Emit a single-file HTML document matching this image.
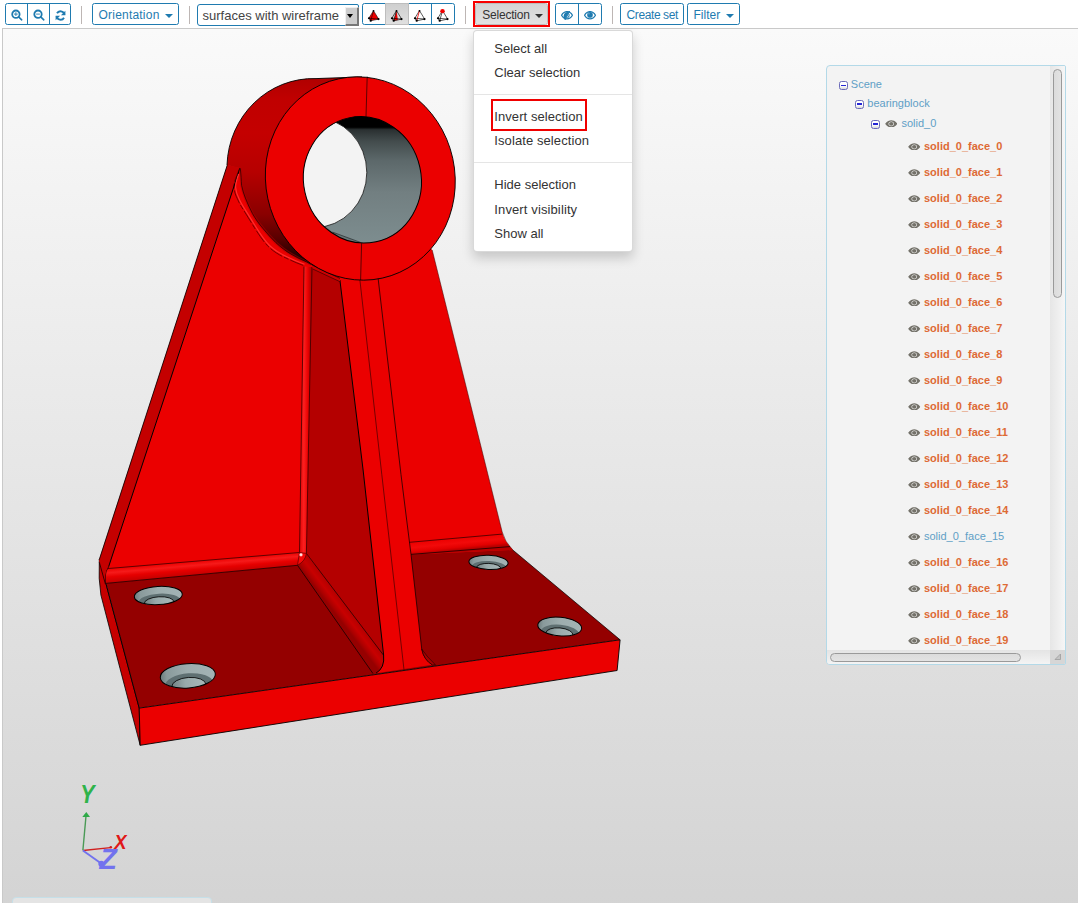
<!DOCTYPE html>
<html>
<head>
<meta charset="utf-8">
<title>CAD viewer</title>
<style>
html,body{margin:0;padding:0;}
body{width:1078px;height:903px;overflow:hidden;background:#fff;position:relative;font-family:"Liberation Sans",sans-serif;}
#canvas{position:absolute;left:2px;top:28px;width:1090px;height:890px;border:1px solid #c9c9c9;box-sizing:border-box;
 background:linear-gradient(to bottom,#fafafa 0%,#d3d3d3 100%);}
#model{position:absolute;left:0;top:0;width:1078px;height:903px;}
.tb{position:absolute;top:3px;height:22px;box-sizing:border-box;border:1px solid #1f7bb0;border-radius:2.5px;background:#fff;color:#1f7bb0;font-size:12px;line-height:20px;white-space:nowrap;}
.tb span.t{position:absolute;top:1px;}
.sep{position:absolute;top:6px;width:1px;height:18px;background:#bdb6b4;}
.caret{position:absolute;width:0;height:0;border-left:4px solid transparent;border-right:4px solid transparent;border-top:4px solid currentColor;top:9.5px;}
.div{position:absolute;top:0;width:1px;height:20px;background:#1f7bb0;}
svg.ic{position:absolute;}
#menu{position:absolute;left:473px;top:30px;width:160px;height:221.5px;box-sizing:border-box;background:#fff;border:1px solid rgba(0,0,0,.15);border-radius:4px;box-shadow:0 6px 12px rgba(0,0,0,.175);font-size:13px;color:#333;}
#menu .mi{position:absolute;left:20.3px;height:16px;line-height:16px;white-space:nowrap;}
#menu .md{position:absolute;left:0;width:158px;height:1px;background:#e5e5e5;}
#tree{position:absolute;left:826px;top:65px;width:240px;height:600px;box-sizing:border-box;border:1px solid #b3d9e8;border-radius:4px 2px 2px 4px;background:#f3f3f3;overflow:hidden;}
.row{position:absolute;left:0;height:16px;width:1078px;font-size:11px;line-height:16px;}
.row span{position:absolute;top:-0.7px;white-space:nowrap;}
.fn{color:#5f9fc6;}
.fn.sel{color:#de6a35;font-weight:bold;}
.lbl{color:#5f9fc6;}
svg.eye{position:absolute;top:4.2px;width:12.5px;height:7.6px;}
.tg{position:absolute;width:9px;height:9px;box-sizing:border-box;border:1px solid #6c6cba;border-radius:2.5px;background:linear-gradient(#fff 55%,#d8d8d8);}
.tg:after{content:"";position:absolute;left:1px;top:2.8px;width:5px;height:1.4px;background:#2626d6;}
</style>
</head>
<body>
<svg width="0" height="0" style="position:absolute">
<defs>
<symbol id="eye" viewBox="0 0 14 10"><path d="M0.2 5 C2.4 1 5 0.2 7 0.2 C9 0.2 11.6 1 13.8 5 C11.6 9 9 9.8 7 9.8 C5 9.8 2.4 9 0.2 5 Z M7 2 C4.9 2 3.9 3.6 3.9 5 C3.9 6.6 5.1 8.2 7 8.2 C8.9 8.2 10.1 6.6 10.1 5 C10.1 3.6 9.1 2 7 2 Z" fill="#74726a" fill-rule="evenodd"/><circle cx="7" cy="5" r="2.45" fill="#74726a"/></symbol>
</defs>
</svg>

<div id="canvas"></div>

<!-- 3D model -->
<svg id="model" viewBox="0 0 1078 903">
<defs>
<linearGradient id="holeg" x1="0" y1="0" x2="1" y2="0"><stop offset="0" stop-color="#6c7c7d"/><stop offset="0.12" stop-color="#899a9b"/><stop offset="0.5" stop-color="#9dadae"/><stop offset="1" stop-color="#a3b3b4"/></linearGradient>
<linearGradient id="holeg2" x1="0" y1="0" x2="1" y2="0"><stop offset="0" stop-color="#728283"/><stop offset="0.4" stop-color="#98a9aa"/><stop offset="1" stop-color="#a8b8b9"/></linearGradient>
<linearGradient id="cylside" gradientUnits="userSpaceOnUse" x1="0" y1="76" x2="0" y2="268"><stop offset="0" stop-color="#ae0000"/><stop offset="0.12" stop-color="#c00000"/><stop offset="0.3" stop-color="#c40000"/><stop offset="0.5" stop-color="#b60000"/><stop offset="0.72" stop-color="#8a0000"/><stop offset="0.85" stop-color="#580000"/><stop offset="0.93" stop-color="#2c0000"/><stop offset="1" stop-color="#0c0000"/></linearGradient>
<linearGradient id="bore" gradientUnits="userSpaceOnUse" x1="0" y1="116" x2="0" y2="243"><stop offset="0" stop-color="#000"/><stop offset="0.085" stop-color="#000"/><stop offset="0.15" stop-color="#3a4243"/><stop offset="0.32" stop-color="#5a6668"/><stop offset="0.55" stop-color="#707f81"/><stop offset="1" stop-color="#7d8d8f"/></linearGradient>
<linearGradient id="vfil" gradientUnits="userSpaceOnUse" x1="299" y1="0" x2="311" y2="0"><stop offset="0" stop-color="#e00000"/><stop offset="0.4" stop-color="#fc2020"/><stop offset="0.75" stop-color="#e80000"/><stop offset="1" stop-color="#b40000"/></linearGradient>
<linearGradient id="hfilL" gradientUnits="userSpaceOnUse" x1="200" y1="560.7" x2="201.2" y2="574.5"><stop offset="0" stop-color="#ec0000"/><stop offset="0.3" stop-color="#f61a1a"/><stop offset="0.6" stop-color="#e60000"/><stop offset="1" stop-color="#c40000"/></linearGradient>
<linearGradient id="hfilR" gradientUnits="userSpaceOnUse" x1="455" y1="538" x2="456.2" y2="550"><stop offset="0" stop-color="#ec0000"/><stop offset="0.45" stop-color="#f20a0a"/><stop offset="0.8" stop-color="#e20000"/><stop offset="1" stop-color="#b80000"/></linearGradient>
<linearGradient id="dfil" gradientUnits="userSpaceOnUse" x1="344" y1="603.2" x2="333.4" y2="611.3"><stop offset="0" stop-color="#b40000"/><stop offset="0.45" stop-color="#c80000"/><stop offset="0.8" stop-color="#ac0000"/><stop offset="1" stop-color="#960000"/></linearGradient>
<linearGradient id="bore2" gradientUnits="userSpaceOnUse" x1="0" y1="116" x2="0" y2="243" gradientTransform="rotate(12.4 362.4 179.8)"><stop offset="0" stop-color="#000"/><stop offset="0.088" stop-color="#000"/><stop offset="0.108" stop-color="#2a3031"/><stop offset="0.2" stop-color="#434c4d"/><stop offset="0.35" stop-color="#5c686a"/><stop offset="0.6" stop-color="#727f81"/><stop offset="1" stop-color="#7d8d8f"/></linearGradient>
<clipPath id="boreclip"><ellipse cx="362.4" cy="179.8" rx="58.8" ry="63.4" transform="rotate(-12.4 362.4 179.8)"/></clipPath>
</defs>

<!-- base left face -->
<polygon points="99.3,559 105.9,583.4 139.2,708 140.2,745.3 120,668.4 100.9,595 99.2,578.4" fill="#c60000" stroke="#000" stroke-width="0.8"/>
<!-- base top -->
<polygon points="106,583 139.2,708.1 620.1,639.8 512.8,550 505,541 300,556" fill="#940000"/>
<!-- base front -->
<polygon points="139.2,708.1 620.1,639.8 617.1,670.5 140.2,745.3" fill="#eb0000" stroke="#000" stroke-width="0.9"/>
<line x1="620.1" y1="639.8" x2="512.8" y2="550" stroke="#000" stroke-width="0.7"/>
<line x1="105.9" y1="583.4" x2="139.2" y2="708.1" stroke="#000" stroke-width="0.9"/>

<!-- back plate (whole) -->
<path d="M227.3,165 L99.5,560 L105.9,583.4 L297.5,565.3 L411,554.4 L512.8,550 Q504.5,541.5 502.2,532 L432.2,250 L360,170 Z" fill="#eb0000"/>
<path d="M432.2,250 L502.2,532 Q504.5,541.5 512.8,550" fill="none" stroke="#300" stroke-opacity="0.7" stroke-width="0.7"/>
<!-- back plate left thin side -->
<path d="M227.3,165 L99.3,559 L99.3,562.3 L105.4,584 L105.6,578 Q106,571 108.7,566.5 L240,168.1 Z" fill="#c40000"/>
<path d="M240,168.1 L108.7,566.5 Q106,571 105.6,578 L105.9,583.4" fill="none" stroke="#000" stroke-width="1"/>
<line x1="227.3" y1="165" x2="99.3" y2="559.5" stroke="#000" stroke-width="0.8"/>
<line x1="99.3" y1="562.3" x2="105.4" y2="584" stroke="#000" stroke-width="0.7"/>

<!-- horizontal fillets -->
<path d="M108.7,566.5 L107,568.6 L299.5,552.5 L297.5,565.3 L105.9,583.4 L105.6,578 Q106,571 108.7,566.5 Z" fill="url(#hfilL)"/>
<line x1="107.3" y1="568.6" x2="299.5" y2="552.5" stroke="#000" stroke-width="0.6"/>
<line x1="105.9" y1="583.4" x2="297.5" y2="565.3" stroke="#000" stroke-width="0.7"/>
<path d="M408.5,542.4 L502.1,534.1 Q504.5,541.5 512.8,550 L411,554.4 Z" fill="url(#hfilR)"/>
<line x1="408.5" y1="542.4" x2="502.1" y2="534.1" stroke="#000" stroke-width="0.6"/>
<line x1="411" y1="554.4" x2="510" y2="546.6" stroke="#000" stroke-width="0.7"/>

<!-- rib left face -->
<polygon points="311,267 339.9,280 363.1,470 383.6,655 306.4,553.4" fill="#b40000"/>
<!-- diagonal fillet rib/base -->
<path d="M306.4,553.4 L383.6,655.5 Q385,668 375.5,673.9 L373.4,674 L297.5,565.3 Z" fill="url(#dfil)"/>
<line x1="306.4" y1="553.4" x2="383.4" y2="655" stroke="#000" stroke-width="0.6"/>
<line x1="297.5" y1="565.3" x2="373" y2="673.6" stroke="#000" stroke-width="0.7"/>
<!-- vertical fillet -->
<polygon points="304,266.5 312,267 306.4,553.4 299.5,552.5" fill="url(#vfil)"/>
<line x1="304" y1="266.5" x2="299.5" y2="552.5" stroke="#200" stroke-width="0.7"/>
<line x1="312" y1="267" x2="306.4" y2="553.4" stroke="#200" stroke-width="0.7"/>
<path d="M299.5,552.5 L306.4,553.4 Q305.5,561 297.5,565.3 Z" fill="#f40808" stroke="#200" stroke-width="0.5"/><circle cx="301" cy="554.8" r="1.7" fill="#ffb0b0"/><circle cx="301" cy="554.8" r="0.9" fill="#fff"/>

<!-- rib front + right fillet -->
<path d="M339.9,280 L378,277.5 L401,474.6 L411,554.4 L421.8,649.7 Q424,660 432.2,664.7 L376,673.2 Q385,668 383.6,655 L363.1,470 Z" fill="#eb0000"/>
<path d="M339.9,280 L363.1,470 L383.6,655 Q385,668 376,673.2" fill="none" stroke="#000" stroke-width="1"/>
<path d="M359.9,280 L381.8,474.6 L404,669.7" fill="none" stroke="#000" stroke-width="0.5"/>
<path d="M378,277.5 L401,474.6 L411,554.4 L421.8,649.7 Q424,660 432.2,664.7" fill="none" stroke="#000" stroke-width="0.7"/>
<path d="M421.8,649.2 Q424,660 432.6,665 L435.3,664.7 Q427,657 421.8,649.2 Z" fill="#a80000" stroke="#000" stroke-width="0.5"/>
<!-- rib-top / cylinder fillet -->
<polygon points="312,265 340,278.4 340,281.7 312.8,269" fill="#d00000"/>
<line x1="312" y1="265" x2="340" y2="278.4" stroke="#000" stroke-width="0.6"/>
<line x1="312.8" y1="269" x2="340" y2="281.7" stroke="#000" stroke-width="0.5"/>

<!-- cylinder side -->
<path d="M365,77 L316,78.6 A86.3,89.6 0 0 0 227,165 L240.3,168.3 C241,175 241.2,180 241.6,185.5 C242.5,190 243.8,194 245.4,198.2 C247.5,203.5 249.8,208.5 252.4,213.5 C255.5,219 259,224 263.2,228.8 C267,233.5 271.5,238.5 276,242.8 C280.5,247 285.5,251 291.2,254.3 C296,257 301,259.8 306.5,261.9 L311.2,264.5 L330,272 L300,200 Z" fill="url(#cylside)"/>
<!-- junction fillet -->
<path d="M240.3,168.3 C241,175 241.2,180 241.6,185.5 C242.5,190 243.8,194 245.4,198.2 C247.5,203.5 249.8,208.5 252.4,213.5 C255.5,219 259,224 263.2,228.8 C267,233.5 271.5,238.5 276,242.8 C280.5,247 285.5,251 291.2,254.3 C296,257 301,259.8 306.5,261.9 L311.2,264.5" fill="none" stroke="#b00000" stroke-opacity="0.5" stroke-width="3"/>
<path d="M238.6,174 C236.5,181 235.3,184 235.6,187.5 C236.2,192.5 237.5,195.5 238.6,197.7 C240.5,202.5 243,206.3 245.6,210.3 L255.8,226.7 C260.4,234.2 264.3,240 269.5,245.5 C275,250.7 280.8,254.1 286.8,256.7 C292.6,259.5 298.5,262 304.5,264.2" fill="none" stroke="#ff3030" stroke-width="1.2"/>
<path d="M239.6,168.3 C236,178 233.5,183 233.9,187 C234.5,193 236,196 237.1,198.2 C239,203 241.5,207 244.1,211 L254.3,227.5 C259,235 263,241 268.3,246.6 C274,252 280,255.5 286.1,258.1 C292,261 298,263.5 304,265.7" fill="none" stroke="#000" stroke-width="0.5" stroke-dasharray="14 2 5 2"/>
<path d="M240.3,168.3 C241,175 241.2,180 241.6,185.5 C242.5,190 243.8,194 245.4,198.2 C247.5,203.5 249.8,208.5 252.4,213.5 C255.5,219 259,224 263.2,228.8 C267,233.5 271.5,238.5 276,242.8 C280.5,247 285.5,251 291.2,254.3 C296,257 301,259.8 306.5,261.9 L311.2,264.5" fill="none" stroke="#000" stroke-width="0.6"/>
<path d="M316,78.6 A86.3,89.6 0 0 0 227,165" fill="none" stroke="#000" stroke-width="0.9"/>
<line x1="316" y1="78.6" x2="362" y2="76.9" stroke="#000" stroke-width="0.9"/>

<!-- front ring -->
<ellipse cx="360.3" cy="178.5" rx="94.63" ry="102" transform="rotate(-12.4 360.3 178.5)" fill="#eb0000" stroke="#000" stroke-width="0.85"/>
<line x1="367.2" y1="76.5" x2="366" y2="116.7" stroke="#000" stroke-width="0.6"/>
<line x1="361.6" y1="243.2" x2="360.6" y2="280" stroke="#000" stroke-width="0.6"/>
<!-- bore -->
<ellipse cx="362.4" cy="179.8" rx="58.8" ry="63.4" transform="rotate(-12.4 362.4 179.8)" fill="url(#bore2)"/>
<g clip-path="url(#boreclip)">
<ellipse cx="314.8" cy="172.5" rx="52" ry="55" fill="#f3f3f3" stroke="#111" stroke-width="0.8"/>
<path d="M322,224 L332.5,232.1 L360.5,242.4 L340,245 L318,232 Z" fill="#000" fill-opacity="0.16"/><path d="M332.5,232.1 L360.5,242.4" stroke="#1a1f20" stroke-width="0.6"/>
</g>
<ellipse cx="362.4" cy="179.8" rx="58.8" ry="63.4" transform="rotate(-12.4 362.4 179.8)" fill="none" stroke="#000" stroke-width="1"/>

<!-- holes -->
<g transform="rotate(-3.3 158.3 595.5)">
<clipPath id="hc1"><ellipse cx="158.3" cy="595.5" rx="24" ry="9.1"/></clipPath>
<ellipse cx="158.3" cy="595.5" rx="24" ry="9.1" fill="url(#holeg)"/>
<g clip-path="url(#hc1)">
<ellipse cx="159.0" cy="601.6" rx="20.9" ry="7.9" fill="#5f7072"/>
<ellipse cx="158.7" cy="602.8" rx="14.9" ry="6.0" fill="url(#holeg2)" stroke="#000" stroke-width="0.8"/>
</g>
<ellipse cx="158.3" cy="595.5" rx="24" ry="9.1" fill="none" stroke="#000" stroke-width="1"/>
</g>
<g transform="rotate(-4 187.8 675.8)">
<clipPath id="hc2"><ellipse cx="187.8" cy="675.8" rx="27.6" ry="12.2"/></clipPath>
<ellipse cx="187.8" cy="675.8" rx="27.6" ry="12.2" fill="url(#holeg)"/>
<g clip-path="url(#hc2)">
<ellipse cx="188.5" cy="684.0" rx="24.0" ry="10.6" fill="#5f7072"/>
<ellipse cx="188.2" cy="685.6" rx="17.1" ry="8.1" fill="url(#holeg2)" stroke="#000" stroke-width="0.8"/>
</g>
<ellipse cx="187.8" cy="675.8" rx="27.6" ry="12.2" fill="none" stroke="#000" stroke-width="1"/>
</g>
<g transform="rotate(2.4 488.5 562.4)">
<clipPath id="hc3"><ellipse cx="488.5" cy="562.4" rx="19.6" ry="7.1"/></clipPath>
<ellipse cx="488.5" cy="562.4" rx="19.6" ry="7.1" fill="url(#holeg)"/>
<g clip-path="url(#hc3)">
<ellipse cx="489.2" cy="567.2" rx="17.1" ry="6.2" fill="#5f7072"/>
<ellipse cx="488.9" cy="568.1" rx="12.2" ry="4.7" fill="url(#holeg2)" stroke="#000" stroke-width="0.8"/>
</g>
<ellipse cx="488.5" cy="562.4" rx="19.6" ry="7.1" fill="none" stroke="#000" stroke-width="1"/>
</g>
<g transform="rotate(5 559.7 626.6)">
<clipPath id="hc4"><ellipse cx="559.7" cy="626.6" rx="22" ry="9.3"/></clipPath>
<ellipse cx="559.7" cy="626.6" rx="22" ry="9.3" fill="url(#holeg)"/>
<g clip-path="url(#hc4)">
<ellipse cx="560.4" cy="632.8" rx="19.1" ry="8.1" fill="#5f7072"/>
<ellipse cx="560.1" cy="634.0" rx="13.6" ry="6.1" fill="url(#holeg2)" stroke="#000" stroke-width="0.8"/>
</g>
<ellipse cx="559.7" cy="626.6" rx="22" ry="9.3" fill="none" stroke="#000" stroke-width="1"/>
</g>

<!-- axis gizmo -->
<g>
<line x1="82.9" y1="850.5" x2="110.5" y2="847.6" stroke="#d02020" stroke-width="1.3"/>
<circle cx="110.8" cy="847.2" r="1.3" fill="#d81818"/>
<line x1="82.9" y1="850.2" x2="86" y2="816" stroke="#4a9a56" stroke-width="1.4"/>
<polygon points="82.3,817 90,817 86.3,812" fill="#2eaa48"/>
<line x1="82.9" y1="850.5" x2="100.5" y2="863" stroke="#7272ee" stroke-width="1.9"/>
<circle cx="101.3" cy="863.8" r="3" fill="#7272ee"/>
<text transform="translate(80.2 802.8) scale(0.86 1)" font-family="Liberation Sans, sans-serif" font-style="italic" font-weight="bold" font-size="25" fill="#2fb34a">Y</text>
<text transform="translate(114.2 848.8) scale(0.9 1)" font-family="Liberation Sans, sans-serif" font-style="italic" font-weight="bold" font-size="20.5" fill="#e01818">X</text>
<text transform="translate(99.5 868.6) scale(0.98 1)" font-family="Liberation Sans, sans-serif" font-weight="bold" font-style="italic" font-size="29" fill="#7272ee">Z</text>
</g>
</svg>

<!-- bottom-left box -->
<div style="position:absolute;left:12px;top:897px;width:200px;height:20px;box-sizing:border-box;border:1px solid #c5dfe8;border-radius:4px;background:#e4e4e4;"></div>

<!-- toolbar -->
<div class="tb" style="left:5px;width:66px;">
 <div class="div" style="left:21px"></div><div class="div" style="left:43px"></div>
 <svg class="ic" style="left:5px;top:5px" width="12" height="12" viewBox="0 0 12 12"><circle cx="4.9" cy="5.2" r="3.7" fill="none" stroke="#1f7bb0" stroke-width="1.8"/><line x1="7.6" y1="7.9" x2="10.7" y2="10.8" stroke="#1f7bb0" stroke-width="1.6" stroke-linecap="round"/><path d="M3 5.1h3.8M4.9 3.2v3.8" stroke="#1f7bb0" stroke-width="0.9"/></svg>
 <svg class="ic" style="left:27px;top:5px" width="12" height="12" viewBox="0 0 12 12"><circle cx="5" cy="5.2" r="3.7" fill="none" stroke="#1f7bb0" stroke-width="1.8"/><line x1="7.7" y1="7.9" x2="10.8" y2="10.8" stroke="#1f7bb0" stroke-width="1.6" stroke-linecap="round"/><path d="M3.1 5.1h3.8" stroke="#1f7bb0" stroke-width="0.9"/></svg>
 <svg class="ic" style="left:49.3px;top:5.6px" width="11" height="11" viewBox="0 0 12 12"><path d="M10.2 5 A4.3 4.3 0 0 0 2.2 3.6" fill="none" stroke="#1f7bb0" stroke-width="2.1"/><path d="M1.8 7 A4.3 4.3 0 0 0 9.8 8.4" fill="none" stroke="#1f7bb0" stroke-width="2.1"/><path d="M11.3 0.8v4.8h-4.8z" fill="#1f7bb0"/><path d="M0.7 11.2v-4.8h4.8z" fill="#1f7bb0"/></svg>
</div>
<div class="sep" style="left:81px"></div>
<div class="tb" style="left:92px;width:87px;"><span class="t" style="left:5.5px;letter-spacing:0.21px">Orientation</span><div class="caret" style="left:72px"></div></div>
<div class="sep" style="left:189px"></div>
<!-- select -->
<div class="tb" style="left:197px;top:4px;width:162px;height:22px;color:#444;font-size:13px;border-radius:3px 2px 2px 3px;"><span class="t" style="left:4.5px;top:0.5px">surfaces with wireframe</span>
 <div style="position:absolute;left:146.5px;top:2px;width:14px;height:18.5px;background:#cdcdcd;border-right:2px solid #777;border-bottom:2px solid #777;border-top:1px solid #f0f0f0;border-left:1px solid #f0f0f0;box-sizing:border-box;"></div>
 <div class="caret" style="left:149px;top:8.5px;border-left-width:3.5px;border-right-width:3.5px;border-top-width:4px;color:#000"></div>
</div>
<!-- icon group -->
<div class="tb" style="left:362px;width:93px;">
 <div style="position:absolute;left:22px;top:-1px;width:24px;height:22px;background:linear-gradient(#cfcfcf,#e0e0e0);border:1px solid #bdbdbd;box-sizing:border-box;"></div>
 <div class="div" style="left:68.3px"></div>
 <svg class="ic" style="left:3.4px;top:4.2px" width="15" height="14.2" viewBox="0 0 16 16" preserveAspectRatio="none"><polygon points="8,3 3,11.5 5,14.5 13.5,12.5" fill="#f00000"/><path d="M8 3L3 11.5L5 14.5L13.5 12.5Z M8 3L5 14.5 M3 11.5L13.5 12.5" fill="none" stroke="#000" stroke-width="0.6"/><circle cx="8" cy="3.2" r="1" /><circle cx="3.2" cy="11.5" r="1.2"/><circle cx="5" cy="14.3" r="1.2"/><circle cx="13.3" cy="12.5" r="1.2"/></svg>
 <svg class="ic" style="left:26.4px;top:4.2px" width="15" height="14.2" viewBox="0 0 16 16" preserveAspectRatio="none"><polygon points="8,3 5,14.5 9.5,13.5" fill="#f00000"/><path d="M8 3L3 11.5L5 14.5L13.5 12.5Z M8 3L5 14.5 M3 11.5L13.5 12.5" fill="none" stroke="#000" stroke-width="0.7"/><circle cx="8" cy="3.2" r="1" /><circle cx="3.2" cy="11.5" r="1.2"/><circle cx="5" cy="14.3" r="1.2"/><circle cx="13.3" cy="12.5" r="1.2"/></svg>
 <svg class="ic" style="left:49.4px;top:4.2px" width="15" height="14.2" viewBox="0 0 16 16" preserveAspectRatio="none"><path d="M8 3L3 11.5L5 14.5L13.5 12.5Z M3 11.5L13.5 12.5" fill="none" stroke="#000" stroke-width="0.7"/><path d="M8 3L5 14.5" stroke="#f00000" stroke-width="0.9"/><circle cx="8" cy="3.2" r="1" /><circle cx="3.2" cy="11.5" r="1.2"/><circle cx="5" cy="14.3" r="1.2"/><circle cx="13.3" cy="12.5" r="1.2"/></svg>
 <svg class="ic" style="left:71.9px;top:4.2px" width="15" height="14.2" viewBox="0 0 16 16" preserveAspectRatio="none"><path d="M8 3L3 11.5L5 14.5L13.5 12.5Z M8 3L5 14.5 M3 11.5L13.5 12.5" fill="none" stroke="#000" stroke-width="0.7"/><circle cx="8" cy="3.6" r="2.4" fill="#f00000"/><circle cx="3.2" cy="11.5" r="1.2"/><circle cx="5" cy="14.3" r="1.2"/><circle cx="13.3" cy="12.5" r="1.2"/></svg>
</div>
<div class="sep" style="left:465px"></div>
<!-- selection (active, red highlight) -->
<div style="position:absolute;left:472.8px;top:0.8px;width:77.4px;height:26.2px;box-sizing:border-box;border:2.6px solid #f80000;"></div>
<div class="tb" style="left:475px;width:73px;background:linear-gradient(#d4d4d4,#e2e2e2);border-color:#bdbdbd;color:#333;"><span class="t" style="left:6.2px;letter-spacing:-0.2px">Selection</span><div class="caret" style="left:59px"></div></div>
<!-- eyes -->
<div class="tb" style="left:555px;width:47px;">
 <div class="div" style="left:22px"></div>
 <svg class="ic" style="left:5px;top:7px" width="12" height="8.5" viewBox="0 0 14 10"><path d="M0.6 5 C2.4 1.8 4.8 0.7 7 0.7 C9.2 0.7 11.6 1.8 13.4 5 C11.6 8.2 9.2 9.3 7 9.3 C4.8 9.3 2.4 8.2 0.6 5Z" fill="none" stroke="#1f7bb0" stroke-width="1.5"/><path d="M9.6 0.2 L4.6 10 L3.2 8.6 C2.6 6 3.4 2.4 6.2 1.6 Z" fill="#1f7bb0"/><path d="M9.2 3.6 A3.2 3.2 0 0 1 7.4 8" fill="none" stroke="#1f7bb0" stroke-width="1.2"/><line x1="10.2" y1="-0.3" x2="4.6" y2="10.6" stroke="#1f7bb0" stroke-width="1.3"/></svg>
 <svg class="ic" style="left:27.8px;top:7px" width="12" height="8.5" viewBox="0 0 14 10"><path d="M0.6 5 C2.4 1.8 4.8 0.7 7 0.7 C9.2 0.7 11.6 1.8 13.4 5 C11.6 8.2 9.2 9.3 7 9.3 C4.8 9.3 2.4 8.2 0.6 5Z" fill="none" stroke="#1f7bb0" stroke-width="1.5"/><ellipse cx="7" cy="4.6" rx="3.3" ry="3.3" fill="#1f7bb0"/><circle cx="5.8" cy="3.2" r="0.8" fill="#7fb6d6"/></svg>
</div>
<div class="sep" style="left:612px"></div>
<div class="tb" style="left:620px;width:64px;"><span class="t" style="left:5.5px;letter-spacing:-0.39px">Create set</span></div>
<div class="tb" style="left:687px;width:53px;"><span class="t" style="left:5.5px">Filter</span><div class="caret" style="left:38px"></div></div>

<!-- dropdown menu -->
<div id="menu">
 <div class="mi" style="top:9.8px">Select all</div>
 <div class="mi" style="top:33.5px">Clear selection</div>
 <div class="md" style="top:62.6px"></div>
 <div style="position:absolute;left:17px;top:68px;width:96px;height:32px;box-sizing:border-box;border:2px solid #f00000;"></div>
 <div class="mi" style="top:78px;letter-spacing:0.07px">Invert selection</div>
 <div class="mi" style="top:102px;letter-spacing:0.09px">Isolate selection</div>
 <div class="md" style="top:131px"></div>
 <div class="mi" style="top:146px">Hide selection</div>
 <div class="mi" style="top:170.5px;letter-spacing:0.12px">Invert visibility</div>
 <div class="mi" style="top:194.5px">Show all</div>
</div>

<!-- tree panel -->
<div id="tree">
 <div style="position:absolute;left:223px;top:0;width:15px;height:584px;background:linear-gradient(to right,#e6e6e6,#f6f6f6);"></div>
 <div style="position:absolute;left:226px;top:3px;width:9px;height:229px;box-sizing:border-box;border:1px solid #9a9a9a;border-radius:5px;background:linear-gradient(to right,#dcdcdc,#e3e3e3);"></div>
 <div style="position:absolute;left:0;top:584px;width:223px;height:14px;background:linear-gradient(#e4e4e4,#f4f4f4);"></div>
 <div style="position:absolute;left:3px;top:586.5px;width:191px;height:9px;box-sizing:border-box;border:1px solid #9a9a9a;border-radius:5px;background:linear-gradient(#dcdcdc,#e3e3e3);"></div>
 <div style="position:absolute;left:223px;top:584px;width:15px;height:14px;background:#d6d6d6;"></div>
 <svg style="position:absolute;left:227px;top:587px" width="8" height="8" viewBox="0 0 8 8"><path d="M6.5 1v5.5h-5.5z" fill="#c4c4c4" stroke="#a2a2a2" stroke-width="0.9"/></svg>
</div>
<div class="row" style="top:76.5px"><div class="tg" style="left:839px;top:4.3px"></div><span class="lbl" style="left:850.8px">Scene</span></div>
<div class="row" style="top:95.5px"><div class="tg" style="left:855px;top:4px"></div><span class="lbl" style="left:867.3px">bearingblock</span></div>
<div class="row" style="top:115.5px"><div class="tg" style="left:870.5px;top:4px"></div><svg class="eye" style="left:884.8px" viewBox="0 0 14 10" preserveAspectRatio="none"><use href="#eye"/></svg><span class="lbl" style="left:901.4px">solid_0</span></div>
<div class="row" style="top:138.5px"><svg class="eye" style="left:908px" viewBox="0 0 14 10" preserveAspectRatio="none"><use href="#eye"/></svg><span class="fn sel" style="left:924px">solid_0_face_0</span></div>
<div class="row" style="top:164.5px"><svg class="eye" style="left:908px" viewBox="0 0 14 10" preserveAspectRatio="none"><use href="#eye"/></svg><span class="fn sel" style="left:924px">solid_0_face_1</span></div>
<div class="row" style="top:190.5px"><svg class="eye" style="left:908px" viewBox="0 0 14 10" preserveAspectRatio="none"><use href="#eye"/></svg><span class="fn sel" style="left:924px">solid_0_face_2</span></div>
<div class="row" style="top:216.5px"><svg class="eye" style="left:908px" viewBox="0 0 14 10" preserveAspectRatio="none"><use href="#eye"/></svg><span class="fn sel" style="left:924px">solid_0_face_3</span></div>
<div class="row" style="top:242.5px"><svg class="eye" style="left:908px" viewBox="0 0 14 10" preserveAspectRatio="none"><use href="#eye"/></svg><span class="fn sel" style="left:924px">solid_0_face_4</span></div>
<div class="row" style="top:268.5px"><svg class="eye" style="left:908px" viewBox="0 0 14 10" preserveAspectRatio="none"><use href="#eye"/></svg><span class="fn sel" style="left:924px">solid_0_face_5</span></div>
<div class="row" style="top:294.5px"><svg class="eye" style="left:908px" viewBox="0 0 14 10" preserveAspectRatio="none"><use href="#eye"/></svg><span class="fn sel" style="left:924px">solid_0_face_6</span></div>
<div class="row" style="top:320.5px"><svg class="eye" style="left:908px" viewBox="0 0 14 10" preserveAspectRatio="none"><use href="#eye"/></svg><span class="fn sel" style="left:924px">solid_0_face_7</span></div>
<div class="row" style="top:346.5px"><svg class="eye" style="left:908px" viewBox="0 0 14 10" preserveAspectRatio="none"><use href="#eye"/></svg><span class="fn sel" style="left:924px">solid_0_face_8</span></div>
<div class="row" style="top:372.5px"><svg class="eye" style="left:908px" viewBox="0 0 14 10" preserveAspectRatio="none"><use href="#eye"/></svg><span class="fn sel" style="left:924px">solid_0_face_9</span></div>
<div class="row" style="top:398.5px"><svg class="eye" style="left:908px" viewBox="0 0 14 10" preserveAspectRatio="none"><use href="#eye"/></svg><span class="fn sel" style="left:924px">solid_0_face_10</span></div>
<div class="row" style="top:424.5px"><svg class="eye" style="left:908px" viewBox="0 0 14 10" preserveAspectRatio="none"><use href="#eye"/></svg><span class="fn sel" style="left:924px">solid_0_face_11</span></div>
<div class="row" style="top:450.5px"><svg class="eye" style="left:908px" viewBox="0 0 14 10" preserveAspectRatio="none"><use href="#eye"/></svg><span class="fn sel" style="left:924px">solid_0_face_12</span></div>
<div class="row" style="top:476.5px"><svg class="eye" style="left:908px" viewBox="0 0 14 10" preserveAspectRatio="none"><use href="#eye"/></svg><span class="fn sel" style="left:924px">solid_0_face_13</span></div>
<div class="row" style="top:502.5px"><svg class="eye" style="left:908px" viewBox="0 0 14 10" preserveAspectRatio="none"><use href="#eye"/></svg><span class="fn sel" style="left:924px">solid_0_face_14</span></div>
<div class="row" style="top:528.5px"><svg class="eye" style="left:908px" viewBox="0 0 14 10" preserveAspectRatio="none"><use href="#eye"/></svg><span class="fn" style="left:924px">solid_0_face_15</span></div>
<div class="row" style="top:554.5px"><svg class="eye" style="left:908px" viewBox="0 0 14 10" preserveAspectRatio="none"><use href="#eye"/></svg><span class="fn sel" style="left:924px">solid_0_face_16</span></div>
<div class="row" style="top:580.5px"><svg class="eye" style="left:908px" viewBox="0 0 14 10" preserveAspectRatio="none"><use href="#eye"/></svg><span class="fn sel" style="left:924px">solid_0_face_17</span></div>
<div class="row" style="top:606.5px"><svg class="eye" style="left:908px" viewBox="0 0 14 10" preserveAspectRatio="none"><use href="#eye"/></svg><span class="fn sel" style="left:924px">solid_0_face_18</span></div>
<div class="row" style="top:632.5px"><svg class="eye" style="left:908px" viewBox="0 0 14 10" preserveAspectRatio="none"><use href="#eye"/></svg><span class="fn sel" style="left:924px">solid_0_face_19</span></div>
</body>
</html>
